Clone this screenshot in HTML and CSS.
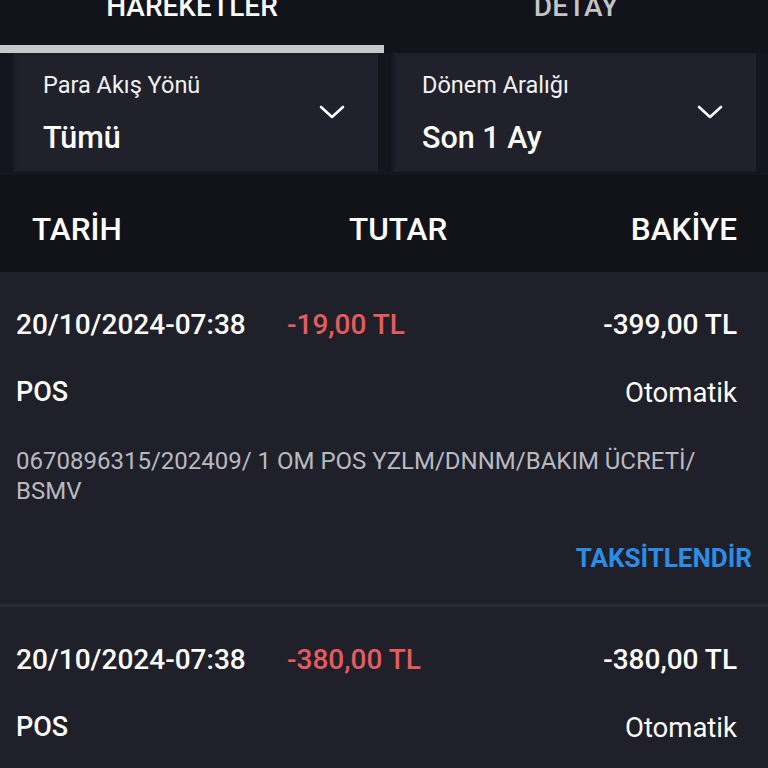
FILE: index.html
```html
<!DOCTYPE html>
<html lang="tr">
<head>
<meta charset="utf-8">
<link rel="stylesheet" href="styles.css">
</head>
<body>
<div class="app">
  <div class="tabs">
    <div class="tab active"><span class="tab-label">HAREKETLER</span></div>
    <div class="tab"><span class="tab-label">DETAY</span></div>
  </div>
  <div class="filters">
    <div class="select">
      <div class="select-text">
        <div class="select-label">Para Akış Yönü</div>
        <div class="select-value">Tümü</div>
      </div>
      <svg class="chevron" width="26" height="14" viewBox="0 0 26 14"><path d="M2 2 L13 12 L24 2" fill="none" stroke="#fff" stroke-width="2.6" stroke-linecap="round" stroke-linejoin="round"/></svg>
    </div>
    <div class="select">
      <div class="select-text">
        <div class="select-label">Dönem Aralığı</div>
        <div class="select-value">Son 1 Ay</div>
      </div>
      <svg class="chevron" width="26" height="14" viewBox="0 0 26 14"><path d="M2 2 L13 12 L24 2" fill="none" stroke="#fff" stroke-width="2.6" stroke-linecap="round" stroke-linejoin="round"/></svg>
    </div>
  </div>
  <div class="table-head">
    <span class="th">TARİH</span>
    <span class="th">TUTAR</span>
    <span class="th th-right">BAKİYE</span>
  </div>
  <div class="tx">
    <div class="tx-line">
      <span class="tx-date">20/10/2024-07:38</span>
      <span class="tx-amount">-19,00 TL</span>
      <span class="tx-balance">-399,00 TL</span>
    </div>
    <div class="tx-line tx-meta">
      <span class="tx-type">POS</span>
      <span class="tx-mode">Otomatik</span>
    </div>
    <div class="tx-desc">0670896315/202409/ 1 OM POS YZLM/DNNM/BAKIM ÜCRETİ/<br>BSMV</div>
    <div class="tx-action"><span class="action-link">TAKSİTLENDİR</span></div>
  </div>
  <div class="tx tx-last">
    <div class="tx-line">
      <span class="tx-date">20/10/2024-07:38</span>
      <span class="tx-amount">-380,00 TL</span>
      <span class="tx-balance">-380,00 TL</span>
    </div>
    <div class="tx-line tx-meta">
      <span class="tx-type">POS</span>
      <span class="tx-mode">Otomatik</span>
    </div>
  </div>
</div>
</body>
</html>
```
FILE: styles.css
```css
* { box-sizing: border-box; }
html, body { margin: 0; padding: 0; }
body {
  background: #1f2029;
  font-family: Roboto, "Noto Sans", sans-serif;
  color: #ffffff;
  width: 768px;
  height: 768px;
  overflow: hidden;
}
.app { width: 768px; }

.tabs {
  display: grid;
  grid-template-columns: 384px 384px;
  height: 53px;
  background: #13131b;
}
.tab {
  display: flex;
  justify-content: center;
  align-items: flex-start;
  overflow: hidden;
}
.tab.active { border-bottom: 8px solid #c6c8c9; }
.tab-label {
  font-size: 28px;
  font-weight: 500;
  line-height: 32px;
  margin-top: -9px;
  color: #c3c4c8;
}
.tab.active .tab-label { color: #ffffff; }

.filters {
  display: grid;
  grid-template-columns: 366px 365px;
  column-gap: 13px;
  padding: 0 12px 3px 12px;
  background: #15151d;
}
.select {
  height: 119px;
  background: #20212b;
  display: flex;
  align-items: center;
  justify-content: space-between;
  padding: 18px 33px 0 31px;
  box-shadow: inset 3px 0 3px rgba(0,0,0,0.25);
}
.select-text { display: flex; flex-direction: column; align-self: flex-start; }
.select-label {
  font-size: 23.5px;
  line-height: 28px;
  color: #f2f2f4;
}
.select-value {
  font-size: 30.5px;
  font-weight: 500;
  line-height: 36px;
  margin-top: 21px;
}
.chevron { margin-top: -20px; }

.table-head {
  display: grid;
  grid-template-columns: 317px 1fr auto;
  align-items: center;
  height: 95px;
  padding: 14px 31px 0 32px;
  background: #121219;
}
.th {
  font-size: 31.5px;
  font-weight: 500;
  line-height: 36px;
}

.tx {
  padding: 34px 16px 0 16px;
  border-top: 2px solid #121219;
  border-bottom: 3px solid #2a2b36;
}
.tx + .tx { border-top: none; }
.tx-last { padding-bottom: 80px; }
.tx-line {
  display: grid;
  grid-template-columns: 271px 1fr auto;
  align-items: center;
  padding-right: 15px;
  height: 36px;
}
.tx-meta {
  display: flex;
  justify-content: space-between;
  margin-top: 32px;
}
.tx-date, .tx-balance, .tx-amount {
  font-size: 28px;
  font-weight: 500;
}
.tx-amount { color: #e45c5e; }
.tx-type { font-size: 27px; font-weight: 500; }
.tx-mode { font-size: 27.5px; }
.tx-desc {
  margin-top: 36px;
  font-size: 24px;
  line-height: 30px;
  color: #b9bac1;
  padding-right: 20px;
}
.tx-action {
  display: flex;
  justify-content: flex-end;
  margin-top: 36px;
  padding-bottom: 30px;
}
.action-link {
  font-size: 26px;
  font-weight: 700;
  color: #2b8de6;
  line-height: 32px;
}
```
